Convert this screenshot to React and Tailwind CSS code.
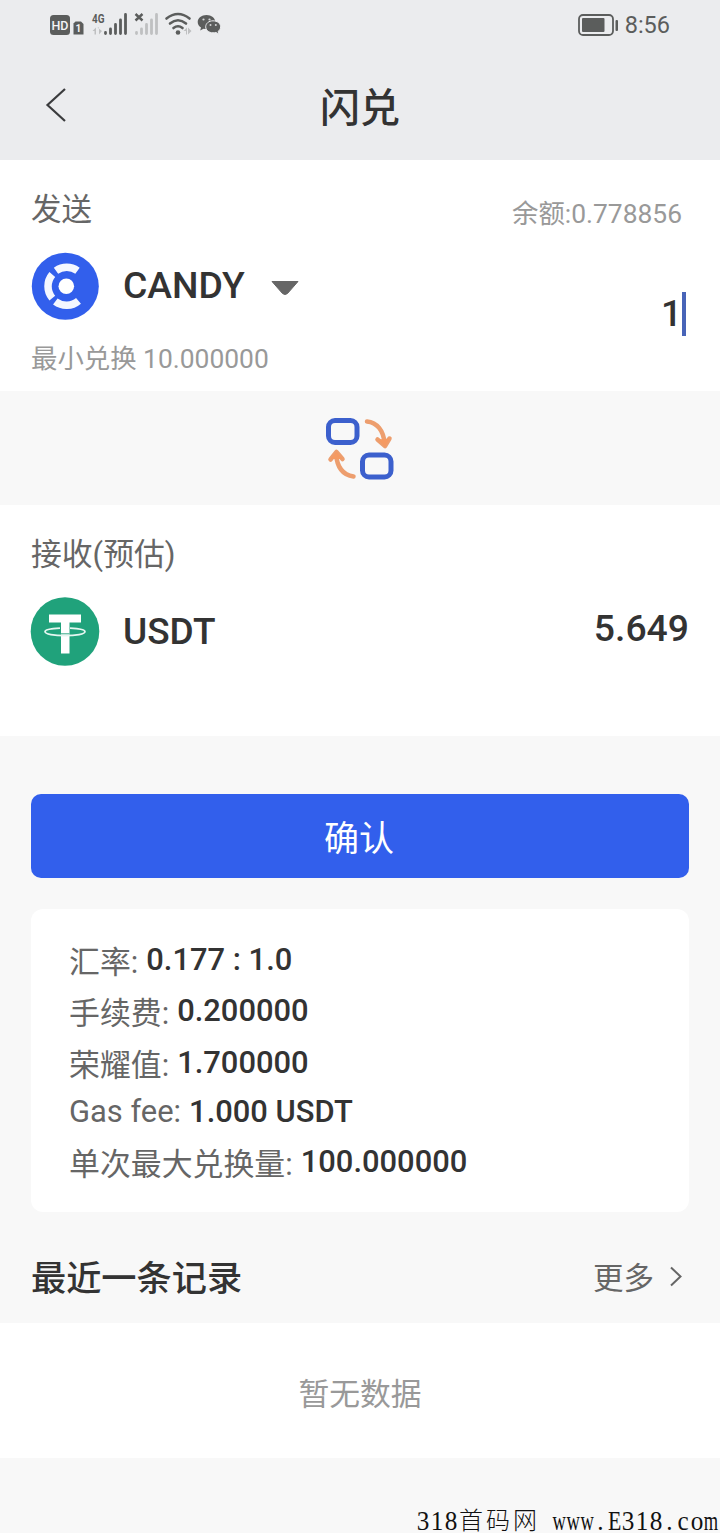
import React, { useState } from 'react';

const details = [
  { label: '汇率:', value: '0.177 : 1.0', row: 'h-[51px]', labelClass: 'pt-[3px]' },
  { label: '手续费:', value: '0.200000', row: 'h-[52px]', labelClass: 'pt-[3px]' },
  { label: '荣耀值:', value: '1.700000', row: 'h-[49px]', labelClass: 'pt-[3px]' },
  { label: 'Gas fee:', value: '1.000 USDT', row: 'h-[50px]', labelClass: '' },
  { label: '单次最大兑换量:', value: '100.000000', row: 'h-[50px]', labelClass: 'pt-[3px]' },
];

const StatusBar = () => (
  <div className="flex h-[50px] items-center justify-between pl-[49px] pr-[50px]">
    <svg className="overflow-visible" width="172" height="34" viewBox="49 8 172 34" fill="#5b5d5c">
      <rect x="50" y="15" width="20" height="20" rx="3.5" />
      <text x="51.5" y="29.5" fontSize="12.5" fontWeight="500" fontFamily="Roboto, sans-serif" fill="#f3f4f5" textLength="17">HD</text>
      <path d="M75.500 21.500H81L83.500 24V34.500H73.500V23.500Z" />
      <text x="75.500" y="32" fontSize="10" fontWeight="700" fontFamily="Roboto, sans-serif" fill="#f3f4f5">1</text>
      <text x="92" y="22.800" fontSize="13.5" fontWeight="700" fontFamily="Roboto, sans-serif" textLength="12.500" lengthAdjust="spacingAndGlyphs">4G</text>
      <g fill="#bfc0c1">
        <path d="M92.500 31L96 27.500V34.500H94.500V31ZM97.500 27.500H99V34.500L102 31Z" />
        <path d="M183.500 31L187 27.500V34.500H186V31ZM188 27.500L191.500 31L188 34.500Z" />
      </g>
      <g strokeWidth="2.800" strokeLinecap="round" stroke="#5b5d5c">
        <path d="M105.500 32.500V33.500M110.500 29V33.500M115.500 24.500V33.500M120.500 20V33.500M125.500 14.500V33.500" />
        <path stroke="#bfc0c1" d="M136.500 32.500V33.500M141.500 29V33.500M146.500 24.500V33.500M151.500 20V33.500M156.500 14.500V33.500" />
      </g>
      <path d="M135.500 14L142.500 20.500M142.500 14L135.500 20.500" stroke="#5b5d5c" strokeWidth="2.400" />
      <g fill="none" stroke="#5b5d5c" strokeWidth="2.600" strokeLinecap="round">
        <path d="M166.500 18.500Q178 9.500 189.500 18.500" />
        <path d="M170 23.500Q178 17 186 23.500" />
        <path d="M173.500 28Q178 24.500 182.500 28" />
      </g>
      <circle cx="178" cy="32.500" r="2.300" />
      <path d="M206.500 15c-5 0-8.800 3-8.800 7 0 2.400 1.300 4.300 3.300 5.500l-.8 3 3.300-1.800c1 .3 2 .4 3 .4 5 0 8.800-3 8.800-7s-3.800-7.100-8.800-7.100Z" />
      <path stroke="#ebecee" d="M213 20.800c-4.300 0-7.300 2.700-7.300 6s3 6 7.300 6c1 0 2-.1 2.900-.4l3 1.800-.8-2.800c1.600-1.100 2.500-2.700 2.500-4.600 0-3.300-3.300-6-7.600-6Z" />
      <g fill="#d5d6d7">
        <circle cx="203.500" cy="19.500" r="1.100" />
        <circle cx="209.500" cy="19.500" r="1.100" />
        <circle cx="210.500" cy="25" r="1" />
        <circle cx="215.800" cy="25" r="1" />
      </g>
    </svg>
    <div className="flex items-center gap-[6px]">
      <svg width="41" height="22" viewBox="0 0 41 22" fill="#5b5d5c">
        <rect x="1" y="1" width="34" height="20" rx="4" fill="none" stroke="#5b5d5c" strokeWidth="1.800" />
        <rect x="4" y="4" width="22.500" height="14" rx="1" />
        <rect x="37.500" y="6" width="2.500" height="11" rx="1" />
      </svg>
      <span className="text-[23.5px] leading-[28px] text-[#5b5d5c]">8:56</span>
    </div>
  </div>
);

const CandyIcon = () => (
  <svg width="68" height="68" viewBox="0 0 68 68">
    <circle cx="34.300" cy="34.300" r="33.500" fill="#325fec" />
    <circle cx="35.300" cy="34.300" r="7.800" fill="#fff" />
    <g fill="none" stroke="#f4f7ff" strokeWidth="7.500">
      <path d="M25 18.800A18.500 18.500 0 0 1 46.500 18.800" />
      <path d="M21.300 22.500A18.500 18.500 0 0 0 21.300 46.200" />
      <path d="M24.300 49.600A18.500 18.500 0 0 0 47.500 48.800" />
    </g>
  </svg>
);

const TetherIcon = () => (
  <svg width="70" height="70" viewBox="0 0 70 70">
    <circle cx="35" cy="35.500" r="34.300" fill="#20a27b" />
    <path d="M19 18.500H51V26.500H39.500V57.500H31V26.500H19Z" fill="#fff" />
    <path d="M30 32.200C21 32.600 15 34 15 35.800c0 2.200 9 3.900 20 3.900s20-1.700 20-3.900c0-1.800-6-3.200-15-3.600" fill="none" stroke="#e5f6f0" strokeWidth="1.700" />
    <path d="M31 37.800H39.500" stroke="#20a27b" strokeWidth="0.900" />
  </svg>
);

const SwapIcon = () => (
  <svg width="70" height="64" viewBox="0 0 70 64" fill="none" strokeLinecap="round" strokeLinejoin="round">
    <g stroke="#3c60cd" strokeWidth="5">
      <rect x="3.500" y="4.500" width="28.500" height="22" rx="6.500" />
      <rect x="37.500" y="39" width="28.500" height="22" rx="6.500" />
    </g>
    <g stroke="#ed9e6e" strokeWidth="4.500">
      <path d="M42 5.500C52 6.500 58.500 14.500 59.500 27" />
      <path d="M52.500 23.500L60 30L64.500 22.500" />
      <path d="M28.500 60.500C18 59 12 51 11 38" />
      <path d="M5.500 43.500L11.500 36L17.500 43" />
    </g>
    <g fill="#f59a62">
      <path d="M53 23.500L60 31L64.500 22.500Z" />
      <path d="M5.500 43L11.500 35.500L17.500 43Z" />
    </g>
  </svg>
);

const Watermark = () => (
  <div className="flex h-[24px] items-center pl-[416px] font-['Liberation_Serif','Noto_Sans_CJK_SC',serif] text-[28px] leading-[24px] text-[#111]">
    {'318首码网 www.E318.com'.split('').map((char, i) => {
      if (/[首码网]/.test(char)) {
        return <span key={i} className="flex w-[27px] shrink-0 justify-center text-[24px] font-light">{char}</span>;
      }
      return (
        <span key={i} className="flex w-[13.8px] shrink-0 justify-center">
          <span className={char === 'w' || char === 'm' ? 'scale-x-[0.66]' : char === 'E' ? 'scale-x-[0.78]' : 'scale-x-[0.9]'}>{char}</span>
        </span>
      );
    })}
  </div>
);

const App = () => {
  const [amount] = useState('1');

  return (
    <div className="flex h-[1533px] w-[720px] flex-col bg-[#f8f8f8] font-['Roboto','Noto_Sans_CJK_SC',sans-serif] text-[#333]">
      <header className="h-[160px] bg-[#ebecee]">
        <StatusBar />
        <div className="grid h-[110px] grid-cols-[160px_1fr_160px] items-center">
          <svg className="ml-[44px]" width="24" height="36" viewBox="0 0 24 36" fill="none" stroke="#3a3b3d" strokeWidth="2.200">
            <path d="M21 2L3.500 18L21 34" />
          </svg>
          <h1 className="pt-[8px] text-center text-[40px] font-medium leading-[60px]">闪兑</h1>
        </div>
      </header>

      <section className="h-[231px] bg-white pl-[31px] pr-[31px] pt-[26px]">
        <div className="flex h-[44px] justify-between">
          <span className="pt-[2px] text-[30.5px] leading-[44px] text-[#666]">发送</span>
          <span className="pr-[7px] pt-[6px] text-[26.4px] leading-[44px] text-[#999]">余额:0.778856</span>
        </div>
        <div className="flex h-[112px] justify-between">
          <div className="flex h-[112px] pt-[22px]">
            <CandyIcon />
            <span className="ml-[24px] pt-[11px] text-[37.3px] font-medium leading-[44px]">CANDY</span>
            <svg className="ml-[25px] mt-[27px]" width="30" height="17" viewBox="0 0 30 17">
              <path d="M2 2.500H28L17.500 14.500Q15 16.500 12.500 14.500Z" fill="#666" stroke="#666" strokeLinejoin="round" />
            </svg>
          </div>
          <div className="flex items-start pr-[3px] pt-[62px]">
            <span className="text-[37px] font-medium leading-[44px]">{amount}</span>
            <span className="h-[44px] w-[4px] bg-[#4864b8]" />
          </div>
        </div>
        <p className="text-[26.4px] leading-[34px] text-[#999]">最小兑换 10.000000</p>
      </section>

      <div className="flex h-[114px] items-center justify-center">
        <SwapIcon />
      </div>

      <section className="h-[231px] bg-white px-[30px] pt-[28px]">
        <p className="pl-[1px] text-[30.8px] leading-[44px] text-[#666]">接收(预估)</p>
        <div className="flex items-center justify-between pt-[19px]">
          <div className="flex items-center gap-[23px]">
            <TetherIcon />
            <span className="pt-[2px] text-[37px] font-medium leading-[44px]">USDT</span>
          </div>
          <span className="pb-[6px] pr-[1px] text-[37.3px] font-medium leading-[44px]">5.649</span>
        </div>
      </section>

      <div className="px-[31px] pt-[58px]">
        <button className="block h-[84px] w-full rounded-[10px] bg-[#325fec] pr-[2px] pt-[7px] text-[35px] leading-[50px] text-white">确认</button>
        <div className="mt-[31px] h-[303px] rounded-[12px] bg-white pl-[38px] pt-[26px]">
          {details.map((item) => (
            <div key={item.label} className={`flex items-start gap-[8px] text-[30.9px] leading-[50px] ${item.row}`}>
              <span className={`text-[#666] ${item.labelClass}`}>{item.label}</span>
              <span className="font-medium">{item.value}</span>
            </div>
          ))}
        </div>
      </div>

      <div className="flex h-[111px] items-center justify-between pl-[31px] pr-[37px] pt-[18px]">
        <h2 className="pt-[4px] text-[35.2px] font-medium leading-[50px]">最近一条记录</h2>
        <div className="flex items-center gap-[15px]">
          <span className="pt-[4px] text-[30.5px] leading-[44px] text-[#666]">更多</span>
          <svg width="14" height="22" viewBox="0 0 14 22" fill="none" stroke="#666" strokeWidth="2">
            <path d="M2 1.500L11.500 10.500L2 19.500" />
          </svg>
        </div>
      </div>
      <div className="flex h-[135px] items-center justify-center bg-white pt-[9px] text-[30.8px] text-[#999]">暂无数据</div>
      <div className="flex flex-1 flex-col justify-end">
        <Watermark />
      </div>
    </div>
  );
};

export default App;
